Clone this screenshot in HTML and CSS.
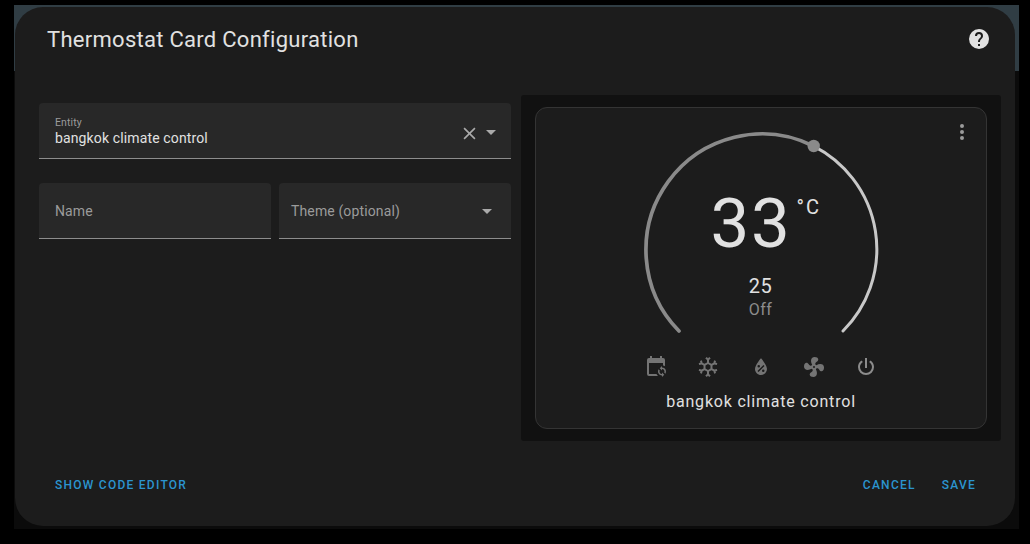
FILE: index.html
```html
<!DOCTYPE html>
<html lang="en">
<head>
<meta charset="utf-8">
<title>Thermostat Card Configuration</title>
<link rel="stylesheet" href="styles.css">
</head>
<body>
<div class="backdrop">
  <section class="dialog">
    <header class="header">
      <h1 class="title">Thermostat Card Configuration</h1>
      <svg class="icon help" viewBox="0 0 24 24"><path d="M15.07,11.25L14.17,12.17C13.45,12.89 13,13.5 13,15H11V14.5C11,13.39 11.45,12.39 12.17,11.67L13.41,10.41C13.78,10.05 14,9.55 14,9C14,7.89 13.1,7 12,7A2,2 0 0,0 10,9H8A4,4 0 0,1 12,5A4,4 0 0,1 16,9C16,9.88 15.64,10.67 15.07,11.25M13,19H11V17H13M12,2A10,10 0 0,0 2,12A10,10 0 0,0 12,22A10,10 0 0,0 22,12C22,6.47 17.5,2 12,2Z"/></svg>
    </header>
    <main class="content">
      <div class="form">
        <div class="field entity">
          <div class="field-text">
            <span class="label">Entity</span>
            <span class="value">bangkok climate control</span>
          </div>
          <svg class="clear" viewBox="0 0 12 12"><path d="M1 1L11 11M11 1L1 11"/></svg>
          <span class="arrow"></span>
        </div>
        <div class="row">
          <div class="field"><span class="placeholder">Name</span></div>
          <div class="field theme"><span class="placeholder">Theme (optional)</span><span class="arrow"></span></div>
        </div>
      </div>
      <div class="preview">
        <article class="card">
          <svg class="icon more" viewBox="0 0 24 24"><path d="M12,16A2,2 0 0,1 14,18A2,2 0 0,1 12,20A2,2 0 0,1 10,18A2,2 0 0,1 12,16M12,10A2,2 0 0,1 14,12A2,2 0 0,1 12,14A2,2 0 0,1 10,12A2,2 0 0,1 12,10M12,4A2,2 0 0,1 14,6A2,2 0 0,1 12,8A2,2 0 0,1 10,6A2,2 0 0,1 12,4Z"/></svg>
          <div class="dial">
            <svg class="ring" viewBox="-120 -120 240 206">
              <path class="rest" d="M52.7 -102.9A115.8 115.8 0 0 1 82 82"/>
              <path class="active" d="M-82 82A116 116 0 0 1 52.7 -102.9"/>
              <circle class="knob" cx="52.7" cy="-103" r="6.2"/>
            </svg>
            <div class="reading">
              <div class="temp">33<span class="unit">°C</span></div>
              <div class="target">25</div>
              <div class="mode">Off</div>
            </div>
          </div>
          <div class="modes">
            <svg class="icon" viewBox="0 0 24 24"><path d="M18,11V12.5C21.19,12.5 23.09,16.05 21.33,18.71L20.24,17.62C21.06,15.96 19.85,14 18,14V15.5L15.75,13.25L18,11M18,22V20.5C14.81,20.5 12.91,16.95 14.67,14.29L15.76,15.38C14.94,17.04 16.15,19 18,19V17.5L20.25,19.75L18,22M19,3H18V1H16V3H8V1H6V3H5A2,2 0 0,0 3,5V19A2,2 0 0,0 5,21H14C13.36,20.45 12.86,19.77 12.5,19H5V8H19V10.59C19.71,10.7 20.39,10.94 21,11.31V5A2,2 0 0,0 19,3Z"/></svg>
            <svg class="icon" viewBox="0 0 24 24"><path d="M20.79,13.95L18.46,14.57L16.46,13.44V10.56L18.46,9.43L20.79,10.05L21.31,8.12L19.54,7.65L20,5.88L18.07,5.36L17.45,7.69L15.45,8.82L13,7.38V5.12L14.71,3.41L13.29,2L12,3.29L10.71,2L9.29,3.41L11,5.12V7.38L8.5,8.82L6.5,7.69L5.92,5.36L4,5.88L4.47,7.65L2.7,8.12L3.22,10.05L5.55,9.43L7.55,10.56V13.45L5.55,14.58L3.22,13.96L2.7,15.89L4.47,16.36L4,18.12L5.93,18.64L6.55,16.31L8.55,15.18L11,16.62V18.88L9.29,20.59L10.71,22L12,20.71L13.29,22L14.7,20.59L13,18.88V16.62L15.5,15.17L17.5,16.3L18.12,18.63L20,18.12L19.53,16.35L21.3,15.88L20.79,13.95M9.5,10.56L12,9.11L14.5,10.56V13.44L12,14.89L9.5,13.44V10.56Z"/></svg>
            <svg class="icon" viewBox="0 0 24 24"><path d="M12,3.25C12,3.25 6,10 6,14C6,17.32 8.69,20 12,20A6,6 0 0,0 18,14C18,10 12,3.25 12,3.25M14.47,9.97L15.53,11.03L9.53,17.03L8.47,15.97M9.75,10A1.25,1.25 0 0,1 11,11.25A1.25,1.25 0 0,1 9.75,12.5A1.25,1.25 0 0,1 8.5,11.25A1.25,1.25 0 0,1 9.75,10M14.25,14.5A1.25,1.25 0 0,1 15.5,15.75A1.25,1.25 0 0,1 14.25,17A1.25,1.25 0 0,1 13,15.75A1.25,1.25 0 0,1 14.25,14.5Z"/></svg>
            <svg class="icon" viewBox="0 0 24 24"><path d="M12,11A1,1 0 0,0 11,12A1,1 0 0,0 12,13A1,1 0 0,0 13,12A1,1 0 0,0 12,11M12.5,2C17,2 17.11,5.57 14.75,6.75C13.76,7.24 13.32,8.29 13.13,9.22C13.61,9.42 14.03,9.73 14.35,10.13C18.05,8.13 22.03,8.92 22.03,12.5C22.03,17 18.46,17.1 17.28,14.73C16.78,13.74 15.72,13.3 14.79,13.11C14.59,13.59 14.28,14 13.88,14.34C15.87,18.03 15.08,22 11.5,22C7,22 6.91,18.42 9.27,17.24C10.25,16.75 10.69,15.71 10.89,14.79C10.4,14.59 9.97,14.27 9.65,13.87C5.96,15.85 2,15.07 2,11.5C2,7 5.56,6.89 6.74,9.26C7.24,10.25 8.29,10.68 9.22,10.87C9.41,10.39 9.73,9.97 10.14,9.65C8.15,5.96 8.94,2 12.5,2Z"/></svg>
            <svg class="icon power" viewBox="0 0 24 24"><path d="M16.56,5.44L15.11,6.89C16.84,7.94 18,9.83 18,12A6,6 0 0,1 12,18A6,6 0 0,1 6,12C6,9.83 7.16,7.94 8.88,6.88L7.44,5.44C5.36,6.88 4,9.28 4,12A8,8 0 0,0 12,20A8,8 0 0,0 20,12C20,9.28 18.64,6.88 16.56,5.44M13,3H11V13H13"/></svg>
          </div>
          <div class="name">bangkok climate control</div>
        </article>
      </div>
    </main>
    <footer class="footer">
      <span class="button">Show code editor</span>
      <span class="button cancel">Cancel</span>
      <span class="button">Save</span>
    </footer>
  </section>
</div>
</body>
</html>
```
FILE: styles.css
```css
* { box-sizing: border-box; }
body {
  margin: 0;
  height: 544px;
  padding: 5px 11px 15px 14px;
  background: #000;
  color: #e1e1e1;
  font-family: Roboto, sans-serif;
  overflow: hidden;
}
.backdrop {
  height: 524px;
  padding: 2px 4px 3px 1px;
  background: linear-gradient(#303d44 0 66px, #0b0b0b 66px);
}
.dialog {
  height: 519px;
  border-radius: 28px;
  background: #1c1c1c;
  display: flex;
  flex-direction: column;
}
.icon { display: block; width: 24px; height: 24px; fill: currentColor; flex: none; }
.header {
  height: 88px;
  padding: 20px 24px 0 32px;
  display: flex;
  justify-content: space-between;
  align-items: flex-start;
}
.title { margin: 0; font-size: 22px; line-height: 26px; font-weight: 400; letter-spacing: 0.28px; white-space: nowrap; }
.content { height: 346px; padding: 0 14px 0 24px; display: flex; gap: 10px; }
.form { width: 472px; padding-top: 8px; display: flex; flex-direction: column; gap: 24px; }
.field {
  height: 56px;
  padding: 0 15px 0 16px;
  border-bottom: 1px solid #8d8d8d;
  border-radius: 4px 4px 0 0;
  background: #282828;
  display: flex;
  align-items: center;
}
.field-text { flex: 1; padding-top: 2px; }
.label, .value { display: block; white-space: nowrap; }
.label { font-size: 10.5px; line-height: 14px; letter-spacing: 0.1px; color: #9b9b9b; }
.value { margin-top: -1px; padding-bottom: 1px; font-size: 14px; line-height: 18px; letter-spacing: 0.13px; }
.placeholder { flex: 1; font-size: 14px; letter-spacing: 0.13px; color: #9b9b9b; white-space: nowrap; }
.clear { width: 13px; height: 13px; margin: 5px 10.5px 0 0; fill: none; stroke: #aaa; stroke-width: 1.5; }
.arrow { border: 5px solid transparent; border-top-color: #aaa; border-bottom: 0; margin-top: 2px; }
.entity .arrow { margin-top: 3px; }
.row { display: grid; grid-template-columns: 1fr 1fr; gap: 8px; }
.theme { padding: 0 19px 0 12px; }
.preview { width: 480px; padding: 12px 14px; border-radius: 3px; background: #111; }
.card {
  position: relative;
  height: 322px;
  border: 1px solid #343434;
  border-radius: 12px;
  background: #1c1c1c;
  padding-top: 21px;
  display: flex;
  flex-direction: column;
  align-items: center;
}
.more { position: absolute; top: 12px; right: 12px; color: #9b9b9b; }
.dial { display: grid; width: 240px; height: 206px; margin-right: 1px; }
.ring, .reading { grid-area: 1 / 1; }
.ring { width: 240px; height: 206px; fill: none; stroke-linecap: round; }
.rest { stroke: #c8c8c8; stroke-width: 3; }
.active { stroke: #8a8a8a; stroke-width: 3.7; }
.knob { fill: #8a8a8a; }
.reading { width: 240px; padding-top: 53px; text-align: center; }
.temp { position: relative; font-size: 69px; line-height: 84px; letter-spacing: 1.8px; padding-right: 19px; }
.unit { position: absolute; left: 156px; top: 13px; font-size: 20px; line-height: 24px; letter-spacing: 2px; }
.target { margin-top: 8px; font-size: 20px; line-height: 24px; letter-spacing: 0.5px; }
.mode { margin-top: 1px; font-size: 16px; line-height: 22px; letter-spacing: 0.5px; color: #8c8c8c; }
.modes { margin-top: 20px; display: flex; gap: 28.5px; color: #747474; }
.modes .icon:nth-child(2) { margin: 0 0.5px 0 -0.5px; }
.modes .power { color: #8c8c8c; }
.name { margin-top: 12px; font-size: 16px; line-height: 22px; letter-spacing: 0.8px; white-space: nowrap; }
.footer { padding: 34px 39px 0 40px; display: flex; gap: 26px; }
.button {
  color: #2b94cf;
  font-size: 12px;
  line-height: 20px;
  font-weight: 500;
  letter-spacing: 1.25px;
  text-transform: uppercase;
}
.cancel { margin-left: auto; }
```
